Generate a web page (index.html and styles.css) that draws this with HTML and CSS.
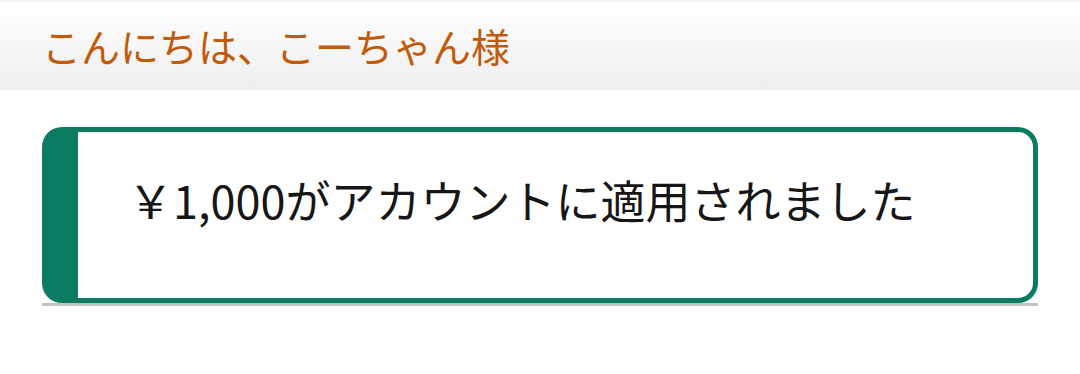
FILE: index.html
```html
<!DOCTYPE html>
<html lang="ja">
<head>
    <meta charset="UTF-8">
    <meta name="viewport" content="width=device-width, initial-scale=1.0">
    <title>アカウント</title>
    <link rel="stylesheet" href="styles.css">
</head>
<body>
    <div class="greeting">こんにちは、こーちゃん様</div>
    <div class="notice-wrap">
        <div class="notice">
            <p class="notice-text">￥1,000がアカウントに適用されました</p>
        </div>
    </div>
</body>
</html>
```

FILE: styles.css
```css
body {
    margin: 0;
    font-family: "Noto Sans CJK JP", "Noto Sans", sans-serif;
    background: #fff;
}
.greeting {
    height: 88px;
    line-height: 86px;
    padding-left: 42px;
    font-size: 39px;
    color: #c25a0c;
    border-top: 2px solid #f4f4f4;
    background: linear-gradient(#ffffff, #eeeeee);
}
.notice-wrap {
    margin: 37px 42px 0;
    border-bottom: 3px solid #bfc1c2;
}
.notice {
    height: 166px;
    border: 5px solid #0b7c61;
    border-left-width: 36px;
    border-radius: 20px;
}
.notice-text {
    margin: 0;
    padding: 35px 0 0 50px;
    font-size: 45px;
    color: #161616;
}
```
